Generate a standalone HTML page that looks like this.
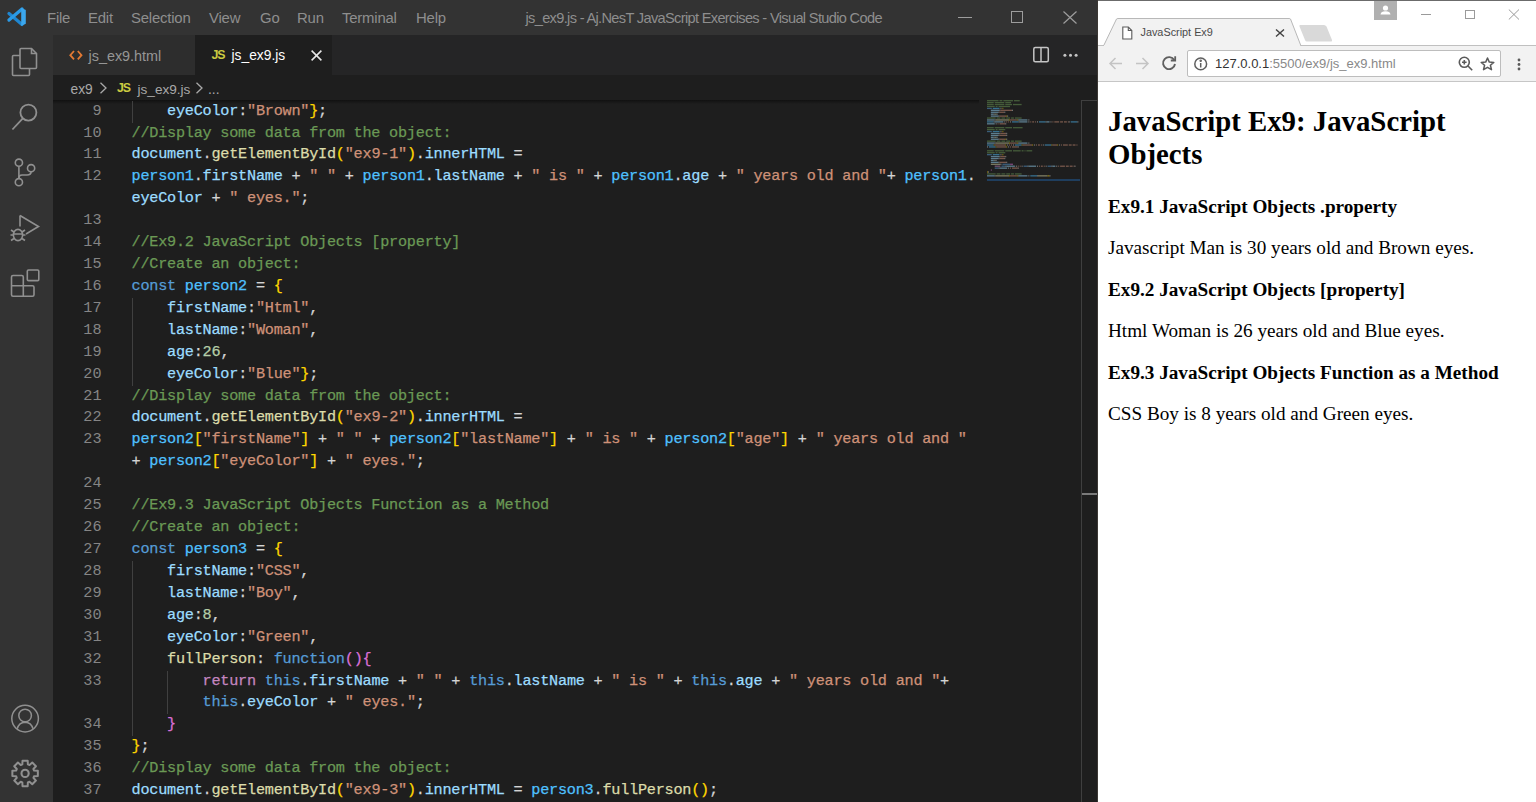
<!DOCTYPE html>
<html><head><meta charset="utf-8"><title>js_ex9.js - VS Code</title>
<style>
*{box-sizing:border-box}
html,body{margin:0;padding:0;width:1536px;height:802px;overflow:hidden;background:#1e1e1e}
body{position:relative;font-family:"Liberation Sans",sans-serif}
.a{position:absolute}
#title{left:0;top:0;width:1098px;height:35px;background:#333333}
.menu{position:absolute;top:8.5px;font-size:14.9px;line-height:18px;color:#8e8e8e;white-space:pre;letter-spacing:-0.2px}
#act{left:0;top:35px;width:53px;height:767px;background:#333333}
#tabs{left:53px;top:35px;width:1045px;height:40px;background:#252526}
#crumbs{left:53px;top:75px;width:1045px;height:25px;background:#1e1e1e}
#editor{left:53px;top:100px;width:1045px;height:702px;background:#1e1e1e}
.ln{position:absolute;right:1434.5px;font-family:"Liberation Mono",monospace;font-size:15.2px;line-height:21.92px;color:#858585;white-space:pre}
.cl{position:absolute;left:131.5px;font-family:"Liberation Mono",monospace;font-size:15.2px;letter-spacing:-0.231px;-webkit-text-stroke:0.25px currentColor;line-height:21.92px;color:#d4d4d4;white-space:pre}
.ig{position:absolute;width:1px;background:#404040}
.mm{position:absolute;height:1.3px;opacity:.5}
.k{color:#569CD6}
.v{color:#4FC1FF}
.p{color:#9CDCFE}
.f{color:#DCDCAA}
.s{color:#CE9178}
.c{color:#6A9955}
.n{color:#B5CEA8}
.o{color:#D4D4D4}
.y{color:#FFD700}
.m{color:#DA70D6}
.r{color:#C586C0}
.ui{position:absolute;white-space:pre;font-family:"Liberation Sans",sans-serif}
#browser{left:1098px;top:0;width:438px;height:802px;background:#fff}
.pg{position:absolute;left:1108px;white-space:pre;font-family:"Liberation Serif",serif;color:#000}
</style></head>
<body>
<!-- ================= VS CODE ================= -->
<div id="title" class="a"></div>
<!-- vscode logo -->
<svg class="a" style="left:0;top:0" width="36" height="34" viewBox="0 0 36 34">
  <path d="M9 13.6 L22 24.4" stroke="#1f86d0" stroke-width="3.3" stroke-linecap="round"/>
  <path d="M9 20.1 L22 8.9" stroke="#2a9ae6" stroke-width="3.3" stroke-linecap="round"/>
  <path d="M21.2 7.8 L25.8 10 V23.8 L21.2 26 Z" fill="#3ba7ee"/>
</svg>
<div class="menu" style="left:47px">File</div>
<div class="menu" style="left:88px">Edit</div>
<div class="menu" style="left:131px">Selection</div>
<div class="menu" style="left:209px">View</div>
<div class="menu" style="left:260px">Go</div>
<div class="menu" style="left:297px">Run</div>
<div class="menu" style="left:342px">Terminal</div>
<div class="menu" style="left:416px">Help</div>
<div class="menu" style="left:525.5px;font-size:14.6px;letter-spacing:-0.665px">js_ex9.js - Aj.NesT JavaScript Exercises - Visual Studio Code</div>
<!-- window controls -->
<div class="a" style="left:958px;top:17px;width:14px;height:1px;background:#9d9d9d"></div>
<div class="a" style="left:1011px;top:11px;width:12px;height:12px;border:1px solid #9d9d9d"></div>
<svg class="a" style="left:1063px;top:11px" width="14" height="13" viewBox="0 0 14 13"><path d="M0.5 0.5 L13.5 12.5 M13.5 0.5 L0.5 12.5" stroke="#9d9d9d" stroke-width="1.2"/></svg>

<div id="act" class="a"></div>
<!-- activity icons -->
<svg class="a" style="left:0;top:35px" width="53" height="767" viewBox="0 35 53 767" fill="none" stroke="#909090" stroke-width="1.6">
  <!-- explorer -->
  <path d="M20 55.5 H13.5 Q12.5 55.5 12.5 56.5 V74.5 Q12.5 75.5 13.5 75.5 H28.5 Q29.5 75.5 29.5 74.5 V69"/>
  <path d="M21 48.5 H31.5 L36.5 53.5 V67.5 Q36.5 68.5 35.5 68.5 H21 Q20 68.5 20 67.5 V49.5 Q20 48.5 21 48.5 Z"/>
  <path d="M31.5 48.5 V53.5 H36.5"/>
  <!-- search -->
  <circle cx="28.4" cy="112.6" r="8" stroke-width="1.8"/>
  <path d="M22.6 118.6 L12.4 129.5" stroke-width="1.8"/>
  <!-- source control -->
  <circle cx="18.9" cy="162.7" r="3.6"/>
  <circle cx="18.9" cy="182.2" r="3.6"/>
  <circle cx="31.1" cy="168.2" r="3.6"/>
  <path d="M18.9 166.3 V178.6"/>
  <path d="M31.1 171.8 Q31.1 175 27 175 H22 Q18.9 175 18.9 178"/>
  <!-- run & debug -->
  <path d="M20 215.5 L38.5 226.5 L26 234"/>
  <path d="M20 215.5 V226.5"/>
  <ellipse cx="18" cy="235" rx="4.6" ry="5.6"/>
  <path d="M11 230 L14 232 M25 230 L22 232 M10.5 235 H13.4 M25.5 235 H22.6 M11 240.5 L14 238.5 M25 240.5 L22 238.5 M13.5 234 H22.5"/>
  <!-- extensions -->
  <path d="M13 275.5 H21.8 Q23.3 275.5 23.3 277 V285.8 H32.5 Q34 285.8 34 287.3 V294.8 Q34 296.3 32.5 296.3 H13 Q11.5 296.3 11.5 294.8 V277 Q11.5 275.5 13 275.5 Z M11.5 285.8 H23.3 V296.3"/>
  <rect x="27.3" y="270" width="11.5" height="10.6" rx="1.2"/>
  <!-- account -->
  <circle cx="25.1" cy="718.6" r="13.3" stroke-width="1.5"/>
  <circle cx="25.1" cy="715.5" r="6.3" stroke-width="1.5"/>
  <path d="M17.2 728.8 Q19 722.5 25.1 722.3 Q31.2 722.5 33 728.8" stroke-width="1.5"/>
  <!-- gear -->
  <circle cx="25.1" cy="773.4" r="3.6" stroke-width="2.1"/>
  <path id="gear" stroke-width="2" stroke-linejoin="round" d="M22.32 764.42 L22.52 760.66 L27.68 760.66 L27.88 764.42 L29.49 765.09 L32.28 762.56 L35.94 766.22 L33.41 769.01 L34.08 770.62 L37.84 770.82 L37.84 775.98 L34.08 776.18 L33.41 777.79 L35.94 780.58 L32.28 784.24 L29.49 781.71 L27.88 782.38 L27.68 786.14 L22.52 786.14 L22.32 782.38 L20.71 781.71 L17.92 784.24 L14.26 780.58 L16.79 777.79 L16.12 776.18 L12.36 775.98 L12.36 770.82 L16.12 770.62 L16.79 769.01 L14.26 766.22 L17.92 762.56 L20.71 765.09 Z"/>
</svg>

<div id="tabs" class="a"></div>
<div class="a" style="left:53px;top:35px;width:141.5px;height:40px;background:#2d2d2d"></div>
<div class="a" style="left:194.5px;top:35px;width:137.5px;height:40px;background:#1e1e1e"></div>
<svg class="a" style="left:68.5px;top:50px" width="14" height="11" viewBox="0 0 14 11" fill="none" stroke="#e37933" stroke-width="1.8"><path d="M5 1 L1.3 5.2 L5 9.4 M8.8 1 L12.5 5.2 L8.8 9.4"/></svg>
<div class="ui" style="left:88.5px;top:45.5px;font-size:14.4px;line-height:20px;color:#969696">js_ex9.html</div>
<div class="ui" style="left:211.5px;top:48.5px;font-size:12.4px;line-height:13px;font-weight:bold;color:#cbcb41;letter-spacing:-1.1px">JS</div>
<div class="ui" style="left:231.5px;top:45.5px;font-size:13.8px;line-height:20px;color:#ffffff">js_ex9.js</div>
<svg class="a" style="left:311px;top:50px" width="11" height="11" viewBox="0 0 11 11"><path d="M0.6 0.6 L10.4 10.4 M10.4 0.6 L0.6 10.4" stroke="#e8e8e8" stroke-width="1.5"/></svg>
<!-- split + more -->
<svg class="a" style="left:1032px;top:46px" width="18" height="18" viewBox="0 0 18 18" fill="none" stroke="#c5c5c5" stroke-width="1.5"><rect x="1.8" y="1.6" width="14.5" height="14.2" rx="1.5"/><path d="M9 1.6 V15.8"/></svg>
<svg class="a" style="left:1060px;top:52px" width="20" height="6" viewBox="0 0 20 6" fill="#c5c5c5"><circle cx="4.9" cy="3.3" r="1.5"/><circle cx="10.5" cy="3.3" r="1.5"/><circle cx="16.1" cy="3.3" r="1.5"/></svg>

<div id="crumbs" class="a"></div>
<div class="ui" style="left:70.5px;top:80.5px;font-size:13.8px;line-height:18px;color:#a9a9a9">ex9</div>
<svg class="a" style="left:99px;top:82px" width="9" height="12" viewBox="0 0 9 12"><path d="M1.5 0.8 L7 6 L1.5 11.2" fill="none" stroke="#a9a9a9" stroke-width="1.3"/></svg>
<div class="ui" style="left:117px;top:81.8px;font-size:12.4px;line-height:13px;font-weight:bold;color:#cbcb41;letter-spacing:-1.1px">JS</div>
<div class="ui" style="left:137.5px;top:80.5px;font-size:13.6px;line-height:18px;color:#a9a9a9">js_ex9.js</div>
<svg class="a" style="left:195px;top:82px" width="9" height="12" viewBox="0 0 9 12"><path d="M1.5 0.8 L7 6 L1.5 11.2" fill="none" stroke="#a9a9a9" stroke-width="1.3"/></svg>
<div class="ui" style="left:208px;top:80.5px;font-size:13.8px;line-height:18px;color:#a9a9a9">...</div>

<div id="editor" class="a"></div>
<!-- scroll shadow -->
<div class="a" style="left:53px;top:100px;width:926px;height:4px;background:linear-gradient(#00000070,#00000000)"></div>
<!-- scrollbar -->
<div class="a" style="left:1081px;top:100px;width:1px;height:702px;background:#3f3f3f"></div>
<div class="a" style="left:1081px;top:100px;width:16px;height:1px;background:#3f3f3f"></div>
<div class="a" style="left:1082px;top:493px;width:15px;height:2px;background:#7a7a7a"></div>
<svg class="a" style="left:987.0px;top:96px;opacity:.5" width="95" height="100" viewBox="0 0 95 100"><rect x="0.00" y="4.05" width="11.54" height="1.3" fill="#6A9955"/><rect x="12.51" y="4.05" width="2.89" height="1.3" fill="#6A9955"/><rect x="16.35" y="4.05" width="9.62" height="1.3" fill="#6A9955"/><rect x="26.94" y="4.05" width="5.77" height="1.3" fill="#6A9955"/><rect x="0.00" y="5.98" width="6.73" height="1.3" fill="#6A9955"/><rect x="7.70" y="5.98" width="9.62" height="1.3" fill="#6A9955"/><rect x="18.28" y="5.98" width="5.77" height="1.3" fill="#6A9955"/><rect x="0.00" y="7.90" width="6.73" height="1.3" fill="#6A9955"/><rect x="7.70" y="7.90" width="9.62" height="1.3" fill="#6A9955"/><rect x="18.28" y="7.90" width="6.73" height="1.3" fill="#6A9955"/><rect x="25.97" y="7.90" width="8.66" height="1.3" fill="#6A9955"/><rect x="0.00" y="9.83" width="7.70" height="1.3" fill="#6A9955"/><rect x="8.66" y="9.83" width="1.92" height="1.3" fill="#6A9955"/><rect x="11.54" y="9.83" width="11.54" height="1.3" fill="#6A9955"/><rect x="0.00" y="11.76" width="4.81" height="1.3" fill="#569CD6"/><rect x="5.77" y="11.76" width="6.73" height="1.3" fill="#4FC1FF"/><rect x="13.47" y="11.76" width="0.96" height="1.3" fill="#D4D4D4"/><rect x="15.39" y="11.76" width="0.96" height="1.3" fill="#FFD700"/><rect x="3.85" y="13.69" width="8.66" height="1.3" fill="#9CDCFE"/><rect x="12.51" y="13.69" width="0.96" height="1.3" fill="#D4D4D4"/><rect x="13.47" y="13.69" width="11.54" height="1.3" fill="#CE9178"/><rect x="25.01" y="13.69" width="0.96" height="1.3" fill="#D4D4D4"/><rect x="3.85" y="15.61" width="7.70" height="1.3" fill="#9CDCFE"/><rect x="11.54" y="15.61" width="0.96" height="1.3" fill="#D4D4D4"/><rect x="12.51" y="15.61" width="4.81" height="1.3" fill="#CE9178"/><rect x="17.32" y="15.61" width="0.96" height="1.3" fill="#D4D4D4"/><rect x="3.85" y="17.54" width="2.89" height="1.3" fill="#9CDCFE"/><rect x="6.73" y="17.54" width="0.96" height="1.3" fill="#D4D4D4"/><rect x="7.70" y="17.54" width="1.92" height="1.3" fill="#B5CEA8"/><rect x="9.62" y="17.54" width="0.96" height="1.3" fill="#D4D4D4"/><rect x="3.85" y="19.47" width="7.70" height="1.3" fill="#9CDCFE"/><rect x="11.54" y="19.47" width="0.96" height="1.3" fill="#D4D4D4"/><rect x="12.51" y="19.47" width="6.73" height="1.3" fill="#CE9178"/><rect x="19.24" y="19.47" width="0.96" height="1.3" fill="#FFD700"/><rect x="20.20" y="19.47" width="0.96" height="1.3" fill="#D4D4D4"/><rect x="0.00" y="21.39" width="8.66" height="1.3" fill="#6A9955"/><rect x="9.62" y="21.39" width="3.85" height="1.3" fill="#6A9955"/><rect x="14.43" y="21.39" width="3.85" height="1.3" fill="#6A9955"/><rect x="19.24" y="21.39" width="3.85" height="1.3" fill="#6A9955"/><rect x="24.05" y="21.39" width="2.89" height="1.3" fill="#6A9955"/><rect x="27.90" y="21.39" width="6.73" height="1.3" fill="#6A9955"/><rect x="0.00" y="23.32" width="7.70" height="1.3" fill="#9CDCFE"/><rect x="7.70" y="23.32" width="0.96" height="1.3" fill="#D4D4D4"/><rect x="8.66" y="23.32" width="13.47" height="1.3" fill="#DCDCAA"/><rect x="22.13" y="23.32" width="0.96" height="1.3" fill="#FFD700"/><rect x="23.09" y="23.32" width="6.73" height="1.3" fill="#CE9178"/><rect x="29.82" y="23.32" width="0.96" height="1.3" fill="#FFD700"/><rect x="30.78" y="23.32" width="0.96" height="1.3" fill="#D4D4D4"/><rect x="31.75" y="23.32" width="8.66" height="1.3" fill="#9CDCFE"/><rect x="41.37" y="23.32" width="0.96" height="1.3" fill="#D4D4D4"/><rect x="0.00" y="25.25" width="6.73" height="1.3" fill="#4FC1FF"/><rect x="6.73" y="25.25" width="0.96" height="1.3" fill="#D4D4D4"/><rect x="7.70" y="25.25" width="8.66" height="1.3" fill="#9CDCFE"/><rect x="17.32" y="25.25" width="0.96" height="1.3" fill="#D4D4D4"/><rect x="19.24" y="25.25" width="0.96" height="1.3" fill="#CE9178"/><rect x="21.16" y="25.25" width="0.96" height="1.3" fill="#CE9178"/><rect x="23.09" y="25.25" width="0.96" height="1.3" fill="#D4D4D4"/><rect x="25.01" y="25.25" width="6.73" height="1.3" fill="#4FC1FF"/><rect x="31.75" y="25.25" width="0.96" height="1.3" fill="#D4D4D4"/><rect x="32.71" y="25.25" width="7.70" height="1.3" fill="#9CDCFE"/><rect x="41.37" y="25.25" width="0.96" height="1.3" fill="#D4D4D4"/><rect x="43.29" y="25.25" width="0.96" height="1.3" fill="#CE9178"/><rect x="45.21" y="25.25" width="1.92" height="1.3" fill="#CE9178"/><rect x="48.10" y="25.25" width="0.96" height="1.3" fill="#CE9178"/><rect x="50.02" y="25.25" width="0.96" height="1.3" fill="#D4D4D4"/><rect x="51.95" y="25.25" width="6.73" height="1.3" fill="#4FC1FF"/><rect x="58.68" y="25.25" width="0.96" height="1.3" fill="#D4D4D4"/><rect x="59.64" y="25.25" width="2.89" height="1.3" fill="#9CDCFE"/><rect x="63.49" y="25.25" width="0.96" height="1.3" fill="#D4D4D4"/><rect x="65.42" y="25.25" width="0.96" height="1.3" fill="#CE9178"/><rect x="67.34" y="25.25" width="4.81" height="1.3" fill="#CE9178"/><rect x="73.11" y="25.25" width="2.89" height="1.3" fill="#CE9178"/><rect x="76.96" y="25.25" width="2.89" height="1.3" fill="#CE9178"/><rect x="80.81" y="25.25" width="0.96" height="1.3" fill="#CE9178"/><rect x="81.77" y="25.25" width="0.96" height="1.3" fill="#D4D4D4"/><rect x="83.69" y="25.25" width="6.73" height="1.3" fill="#4FC1FF"/><rect x="90.43" y="25.25" width="0.96" height="1.3" fill="#D4D4D4"/><rect x="0.00" y="27.17" width="7.70" height="1.3" fill="#9CDCFE"/><rect x="8.66" y="27.17" width="0.96" height="1.3" fill="#D4D4D4"/><rect x="10.58" y="27.17" width="0.96" height="1.3" fill="#CE9178"/><rect x="12.51" y="27.17" width="5.77" height="1.3" fill="#CE9178"/><rect x="18.28" y="27.17" width="0.96" height="1.3" fill="#D4D4D4"/><rect x="0.00" y="31.03" width="6.73" height="1.3" fill="#6A9955"/><rect x="7.70" y="31.03" width="9.62" height="1.3" fill="#6A9955"/><rect x="18.28" y="31.03" width="6.73" height="1.3" fill="#6A9955"/><rect x="25.97" y="31.03" width="9.62" height="1.3" fill="#6A9955"/><rect x="0.00" y="32.95" width="7.70" height="1.3" fill="#6A9955"/><rect x="8.66" y="32.95" width="1.92" height="1.3" fill="#6A9955"/><rect x="11.54" y="32.95" width="6.73" height="1.3" fill="#6A9955"/><rect x="0.00" y="34.88" width="4.81" height="1.3" fill="#569CD6"/><rect x="5.77" y="34.88" width="6.73" height="1.3" fill="#4FC1FF"/><rect x="13.47" y="34.88" width="0.96" height="1.3" fill="#D4D4D4"/><rect x="15.39" y="34.88" width="0.96" height="1.3" fill="#FFD700"/><rect x="3.85" y="36.81" width="8.66" height="1.3" fill="#9CDCFE"/><rect x="12.51" y="36.81" width="0.96" height="1.3" fill="#D4D4D4"/><rect x="13.47" y="36.81" width="5.77" height="1.3" fill="#CE9178"/><rect x="19.24" y="36.81" width="0.96" height="1.3" fill="#D4D4D4"/><rect x="3.85" y="38.74" width="7.70" height="1.3" fill="#9CDCFE"/><rect x="11.54" y="38.74" width="0.96" height="1.3" fill="#D4D4D4"/><rect x="12.51" y="38.74" width="6.73" height="1.3" fill="#CE9178"/><rect x="19.24" y="38.74" width="0.96" height="1.3" fill="#D4D4D4"/><rect x="3.85" y="40.66" width="2.89" height="1.3" fill="#9CDCFE"/><rect x="6.73" y="40.66" width="0.96" height="1.3" fill="#D4D4D4"/><rect x="7.70" y="40.66" width="1.92" height="1.3" fill="#B5CEA8"/><rect x="9.62" y="40.66" width="0.96" height="1.3" fill="#D4D4D4"/><rect x="3.85" y="42.59" width="7.70" height="1.3" fill="#9CDCFE"/><rect x="11.54" y="42.59" width="0.96" height="1.3" fill="#D4D4D4"/><rect x="12.51" y="42.59" width="5.77" height="1.3" fill="#CE9178"/><rect x="18.28" y="42.59" width="0.96" height="1.3" fill="#FFD700"/><rect x="19.24" y="42.59" width="0.96" height="1.3" fill="#D4D4D4"/><rect x="0.00" y="44.52" width="8.66" height="1.3" fill="#6A9955"/><rect x="9.62" y="44.52" width="3.85" height="1.3" fill="#6A9955"/><rect x="14.43" y="44.52" width="3.85" height="1.3" fill="#6A9955"/><rect x="19.24" y="44.52" width="3.85" height="1.3" fill="#6A9955"/><rect x="24.05" y="44.52" width="2.89" height="1.3" fill="#6A9955"/><rect x="27.90" y="44.52" width="6.73" height="1.3" fill="#6A9955"/><rect x="0.00" y="46.44" width="7.70" height="1.3" fill="#9CDCFE"/><rect x="7.70" y="46.44" width="0.96" height="1.3" fill="#D4D4D4"/><rect x="8.66" y="46.44" width="13.47" height="1.3" fill="#DCDCAA"/><rect x="22.13" y="46.44" width="0.96" height="1.3" fill="#FFD700"/><rect x="23.09" y="46.44" width="6.73" height="1.3" fill="#CE9178"/><rect x="29.82" y="46.44" width="0.96" height="1.3" fill="#FFD700"/><rect x="30.78" y="46.44" width="0.96" height="1.3" fill="#D4D4D4"/><rect x="31.75" y="46.44" width="8.66" height="1.3" fill="#9CDCFE"/><rect x="41.37" y="46.44" width="0.96" height="1.3" fill="#D4D4D4"/><rect x="0.00" y="48.37" width="6.73" height="1.3" fill="#4FC1FF"/><rect x="6.73" y="48.37" width="0.96" height="1.3" fill="#FFD700"/><rect x="7.70" y="48.37" width="10.58" height="1.3" fill="#CE9178"/><rect x="18.28" y="48.37" width="0.96" height="1.3" fill="#FFD700"/><rect x="20.20" y="48.37" width="0.96" height="1.3" fill="#D4D4D4"/><rect x="22.13" y="48.37" width="0.96" height="1.3" fill="#CE9178"/><rect x="24.05" y="48.37" width="0.96" height="1.3" fill="#CE9178"/><rect x="25.97" y="48.37" width="0.96" height="1.3" fill="#D4D4D4"/><rect x="27.90" y="48.37" width="6.73" height="1.3" fill="#4FC1FF"/><rect x="34.63" y="48.37" width="0.96" height="1.3" fill="#FFD700"/><rect x="35.59" y="48.37" width="9.62" height="1.3" fill="#CE9178"/><rect x="45.21" y="48.37" width="0.96" height="1.3" fill="#FFD700"/><rect x="47.14" y="48.37" width="0.96" height="1.3" fill="#D4D4D4"/><rect x="49.06" y="48.37" width="0.96" height="1.3" fill="#CE9178"/><rect x="50.99" y="48.37" width="1.92" height="1.3" fill="#CE9178"/><rect x="53.87" y="48.37" width="0.96" height="1.3" fill="#CE9178"/><rect x="55.80" y="48.37" width="0.96" height="1.3" fill="#D4D4D4"/><rect x="57.72" y="48.37" width="6.73" height="1.3" fill="#4FC1FF"/><rect x="64.45" y="48.37" width="0.96" height="1.3" fill="#FFD700"/><rect x="65.42" y="48.37" width="4.81" height="1.3" fill="#CE9178"/><rect x="70.23" y="48.37" width="0.96" height="1.3" fill="#FFD700"/><rect x="72.15" y="48.37" width="0.96" height="1.3" fill="#D4D4D4"/><rect x="74.07" y="48.37" width="0.96" height="1.3" fill="#CE9178"/><rect x="76.00" y="48.37" width="4.81" height="1.3" fill="#CE9178"/><rect x="81.77" y="48.37" width="2.89" height="1.3" fill="#CE9178"/><rect x="85.62" y="48.37" width="2.89" height="1.3" fill="#CE9178"/><rect x="89.47" y="48.37" width="0.96" height="1.3" fill="#CE9178"/><rect x="0.00" y="50.30" width="0.96" height="1.3" fill="#D4D4D4"/><rect x="1.92" y="50.30" width="6.73" height="1.3" fill="#4FC1FF"/><rect x="8.66" y="50.30" width="0.96" height="1.3" fill="#FFD700"/><rect x="9.62" y="50.30" width="9.62" height="1.3" fill="#CE9178"/><rect x="19.24" y="50.30" width="0.96" height="1.3" fill="#FFD700"/><rect x="21.16" y="50.30" width="0.96" height="1.3" fill="#D4D4D4"/><rect x="23.09" y="50.30" width="0.96" height="1.3" fill="#CE9178"/><rect x="25.01" y="50.30" width="5.77" height="1.3" fill="#CE9178"/><rect x="30.78" y="50.30" width="0.96" height="1.3" fill="#D4D4D4"/><rect x="0.00" y="54.15" width="6.73" height="1.3" fill="#6A9955"/><rect x="7.70" y="54.15" width="9.62" height="1.3" fill="#6A9955"/><rect x="18.28" y="54.15" width="6.73" height="1.3" fill="#6A9955"/><rect x="25.97" y="54.15" width="7.70" height="1.3" fill="#6A9955"/><rect x="34.63" y="54.15" width="1.92" height="1.3" fill="#6A9955"/><rect x="37.52" y="54.15" width="0.96" height="1.3" fill="#6A9955"/><rect x="39.44" y="54.15" width="5.77" height="1.3" fill="#6A9955"/><rect x="0.00" y="56.08" width="7.70" height="1.3" fill="#6A9955"/><rect x="8.66" y="56.08" width="1.92" height="1.3" fill="#6A9955"/><rect x="11.54" y="56.08" width="6.73" height="1.3" fill="#6A9955"/><rect x="0.00" y="58.01" width="4.81" height="1.3" fill="#569CD6"/><rect x="5.77" y="58.01" width="6.73" height="1.3" fill="#4FC1FF"/><rect x="13.47" y="58.01" width="0.96" height="1.3" fill="#D4D4D4"/><rect x="15.39" y="58.01" width="0.96" height="1.3" fill="#FFD700"/><rect x="3.85" y="59.93" width="8.66" height="1.3" fill="#9CDCFE"/><rect x="12.51" y="59.93" width="0.96" height="1.3" fill="#D4D4D4"/><rect x="13.47" y="59.93" width="4.81" height="1.3" fill="#CE9178"/><rect x="18.28" y="59.93" width="0.96" height="1.3" fill="#D4D4D4"/><rect x="3.85" y="61.86" width="7.70" height="1.3" fill="#9CDCFE"/><rect x="11.54" y="61.86" width="0.96" height="1.3" fill="#D4D4D4"/><rect x="12.51" y="61.86" width="4.81" height="1.3" fill="#CE9178"/><rect x="17.32" y="61.86" width="0.96" height="1.3" fill="#D4D4D4"/><rect x="3.85" y="63.79" width="2.89" height="1.3" fill="#9CDCFE"/><rect x="6.73" y="63.79" width="0.96" height="1.3" fill="#D4D4D4"/><rect x="7.70" y="63.79" width="0.96" height="1.3" fill="#B5CEA8"/><rect x="8.66" y="63.79" width="0.96" height="1.3" fill="#D4D4D4"/><rect x="3.85" y="65.71" width="7.70" height="1.3" fill="#9CDCFE"/><rect x="11.54" y="65.71" width="0.96" height="1.3" fill="#D4D4D4"/><rect x="12.51" y="65.71" width="6.73" height="1.3" fill="#CE9178"/><rect x="19.24" y="65.71" width="0.96" height="1.3" fill="#D4D4D4"/><rect x="3.85" y="67.64" width="9.62" height="1.3" fill="#DCDCAA"/><rect x="13.47" y="67.64" width="0.96" height="1.3" fill="#D4D4D4"/><rect x="15.39" y="67.64" width="7.70" height="1.3" fill="#569CD6"/><rect x="23.09" y="67.64" width="2.89" height="1.3" fill="#DA70D6"/><rect x="7.70" y="69.57" width="5.77" height="1.3" fill="#C586C0"/><rect x="14.43" y="69.57" width="3.85" height="1.3" fill="#569CD6"/><rect x="18.28" y="69.57" width="0.96" height="1.3" fill="#D4D4D4"/><rect x="19.24" y="69.57" width="8.66" height="1.3" fill="#9CDCFE"/><rect x="28.86" y="69.57" width="0.96" height="1.3" fill="#D4D4D4"/><rect x="30.78" y="69.57" width="0.96" height="1.3" fill="#CE9178"/><rect x="32.71" y="69.57" width="0.96" height="1.3" fill="#CE9178"/><rect x="34.63" y="69.57" width="0.96" height="1.3" fill="#D4D4D4"/><rect x="36.56" y="69.57" width="3.85" height="1.3" fill="#569CD6"/><rect x="40.40" y="69.57" width="0.96" height="1.3" fill="#D4D4D4"/><rect x="41.37" y="69.57" width="7.70" height="1.3" fill="#9CDCFE"/><rect x="50.02" y="69.57" width="0.96" height="1.3" fill="#D4D4D4"/><rect x="51.95" y="69.57" width="0.96" height="1.3" fill="#CE9178"/><rect x="53.87" y="69.57" width="1.92" height="1.3" fill="#CE9178"/><rect x="56.76" y="69.57" width="0.96" height="1.3" fill="#CE9178"/><rect x="58.68" y="69.57" width="0.96" height="1.3" fill="#D4D4D4"/><rect x="60.61" y="69.57" width="3.85" height="1.3" fill="#569CD6"/><rect x="64.45" y="69.57" width="0.96" height="1.3" fill="#D4D4D4"/><rect x="65.42" y="69.57" width="2.89" height="1.3" fill="#9CDCFE"/><rect x="69.26" y="69.57" width="0.96" height="1.3" fill="#D4D4D4"/><rect x="71.19" y="69.57" width="0.96" height="1.3" fill="#CE9178"/><rect x="73.11" y="69.57" width="4.81" height="1.3" fill="#CE9178"/><rect x="78.88" y="69.57" width="2.89" height="1.3" fill="#CE9178"/><rect x="82.73" y="69.57" width="2.89" height="1.3" fill="#CE9178"/><rect x="86.58" y="69.57" width="0.96" height="1.3" fill="#CE9178"/><rect x="87.54" y="69.57" width="0.96" height="1.3" fill="#D4D4D4"/><rect x="7.70" y="71.50" width="3.85" height="1.3" fill="#569CD6"/><rect x="11.54" y="71.50" width="0.96" height="1.3" fill="#D4D4D4"/><rect x="12.51" y="71.50" width="7.70" height="1.3" fill="#9CDCFE"/><rect x="21.16" y="71.50" width="0.96" height="1.3" fill="#D4D4D4"/><rect x="23.09" y="71.50" width="0.96" height="1.3" fill="#CE9178"/><rect x="25.01" y="71.50" width="5.77" height="1.3" fill="#CE9178"/><rect x="30.78" y="71.50" width="0.96" height="1.3" fill="#D4D4D4"/><rect x="3.85" y="73.42" width="0.96" height="1.3" fill="#DA70D6"/><rect x="0.00" y="75.35" width="0.96" height="1.3" fill="#FFD700"/><rect x="0.96" y="75.35" width="0.96" height="1.3" fill="#D4D4D4"/><rect x="0.00" y="77.28" width="8.66" height="1.3" fill="#6A9955"/><rect x="9.62" y="77.28" width="3.85" height="1.3" fill="#6A9955"/><rect x="14.43" y="77.28" width="3.85" height="1.3" fill="#6A9955"/><rect x="19.24" y="77.28" width="3.85" height="1.3" fill="#6A9955"/><rect x="24.05" y="77.28" width="2.89" height="1.3" fill="#6A9955"/><rect x="27.90" y="77.28" width="6.73" height="1.3" fill="#6A9955"/><rect x="0.00" y="79.20" width="7.70" height="1.3" fill="#9CDCFE"/><rect x="7.70" y="79.20" width="0.96" height="1.3" fill="#D4D4D4"/><rect x="8.66" y="79.20" width="13.47" height="1.3" fill="#DCDCAA"/><rect x="22.13" y="79.20" width="0.96" height="1.3" fill="#FFD700"/><rect x="23.09" y="79.20" width="6.73" height="1.3" fill="#CE9178"/><rect x="29.82" y="79.20" width="0.96" height="1.3" fill="#FFD700"/><rect x="30.78" y="79.20" width="0.96" height="1.3" fill="#D4D4D4"/><rect x="31.75" y="79.20" width="8.66" height="1.3" fill="#9CDCFE"/><rect x="41.37" y="79.20" width="0.96" height="1.3" fill="#D4D4D4"/><rect x="43.29" y="79.20" width="6.73" height="1.3" fill="#4FC1FF"/><rect x="50.02" y="79.20" width="0.96" height="1.3" fill="#D4D4D4"/><rect x="50.99" y="79.20" width="9.62" height="1.3" fill="#DCDCAA"/><rect x="60.61" y="79.20" width="1.92" height="1.3" fill="#FFD700"/><rect x="62.53" y="79.20" width="0.96" height="1.3" fill="#D4D4D4"/></svg>
<div class="a" style="left:987px;top:178.8px;width:93px;height:2px;background:#1f3e5e"></div>
<div class="ln" style="top:100.60px">9</div>
<div class="cl" style="top:100.60px"><span class="o">    </span><span class="p">eyeColor</span><span class="o">:</span><span class="s">&quot;Brown&quot;</span><span class="y">}</span><span class="o">;</span></div>
<div class="ln" style="top:122.52px">10</div>
<div class="cl" style="top:122.52px"><span class="c">//Display some data from the object:</span></div>
<div class="ln" style="top:144.44px">11</div>
<div class="cl" style="top:144.44px"><span class="p">document</span><span class="o">.</span><span class="f">getElementById</span><span class="y">(</span><span class="s">&quot;ex9-1&quot;</span><span class="y">)</span><span class="o">.</span><span class="p">innerHTML</span><span class="o"> =</span></div>
<div class="ln" style="top:166.36px">12</div>
<div class="cl" style="top:166.36px"><span class="v">person1</span><span class="o">.</span><span class="p">firstName</span><span class="o"> + </span><span class="s">&quot; &quot;</span><span class="o"> + </span><span class="v">person1</span><span class="o">.</span><span class="p">lastName</span><span class="o"> + </span><span class="s">&quot; is &quot;</span><span class="o"> + </span><span class="v">person1</span><span class="o">.</span><span class="p">age</span><span class="o"> + </span><span class="s">&quot; years old and &quot;</span><span class="o">+ </span><span class="v">person1</span><span class="o">.</span></div>
<div class="cl" style="top:188.28px"><span class="p">eyeColor</span><span class="o"> + </span><span class="s">&quot; eyes.&quot;</span><span class="o">;</span></div>
<div class="ln" style="top:210.20px">13</div>
<div class="ln" style="top:232.12px">14</div>
<div class="cl" style="top:232.12px"><span class="c">//Ex9.2 JavaScript Objects [property]</span></div>
<div class="ln" style="top:254.04px">15</div>
<div class="cl" style="top:254.04px"><span class="c">//Create an object:</span></div>
<div class="ln" style="top:275.96px">16</div>
<div class="cl" style="top:275.96px"><span class="k">const</span><span class="o"> </span><span class="v">person2</span><span class="o"> = </span><span class="y">{</span></div>
<div class="ln" style="top:297.88px">17</div>
<div class="cl" style="top:297.88px"><span class="o">    </span><span class="p">firstName</span><span class="o">:</span><span class="s">&quot;Html&quot;</span><span class="o">,</span></div>
<div class="ln" style="top:319.80px">18</div>
<div class="cl" style="top:319.80px"><span class="o">    </span><span class="p">lastName</span><span class="o">:</span><span class="s">&quot;Woman&quot;</span><span class="o">,</span></div>
<div class="ln" style="top:341.72px">19</div>
<div class="cl" style="top:341.72px"><span class="o">    </span><span class="p">age</span><span class="o">:</span><span class="n">26</span><span class="o">,</span></div>
<div class="ln" style="top:363.64px">20</div>
<div class="cl" style="top:363.64px"><span class="o">    </span><span class="p">eyeColor</span><span class="o">:</span><span class="s">&quot;Blue&quot;</span><span class="y">}</span><span class="o">;</span></div>
<div class="ln" style="top:385.56px">21</div>
<div class="cl" style="top:385.56px"><span class="c">//Display some data from the object:</span></div>
<div class="ln" style="top:407.48px">22</div>
<div class="cl" style="top:407.48px"><span class="p">document</span><span class="o">.</span><span class="f">getElementById</span><span class="y">(</span><span class="s">&quot;ex9-2&quot;</span><span class="y">)</span><span class="o">.</span><span class="p">innerHTML</span><span class="o"> =</span></div>
<div class="ln" style="top:429.40px">23</div>
<div class="cl" style="top:429.40px"><span class="v">person2</span><span class="y">[</span><span class="s">&quot;firstName&quot;</span><span class="y">]</span><span class="o"> + </span><span class="s">&quot; &quot;</span><span class="o"> + </span><span class="v">person2</span><span class="y">[</span><span class="s">&quot;lastName&quot;</span><span class="y">]</span><span class="o"> + </span><span class="s">&quot; is &quot;</span><span class="o"> + </span><span class="v">person2</span><span class="y">[</span><span class="s">&quot;age&quot;</span><span class="y">]</span><span class="o"> + </span><span class="s">&quot; years old and &quot;</span></div>
<div class="cl" style="top:451.32px"><span class="o">+ </span><span class="v">person2</span><span class="y">[</span><span class="s">&quot;eyeColor&quot;</span><span class="y">]</span><span class="o"> + </span><span class="s">&quot; eyes.&quot;</span><span class="o">;</span></div>
<div class="ln" style="top:473.24px">24</div>
<div class="ln" style="top:495.16px">25</div>
<div class="cl" style="top:495.16px"><span class="c">//Ex9.3 JavaScript Objects Function as a Method</span></div>
<div class="ln" style="top:517.08px">26</div>
<div class="cl" style="top:517.08px"><span class="c">//Create an object:</span></div>
<div class="ln" style="top:539.00px">27</div>
<div class="cl" style="top:539.00px"><span class="k">const</span><span class="o"> </span><span class="v">person3</span><span class="o"> = </span><span class="y">{</span></div>
<div class="ln" style="top:560.92px">28</div>
<div class="cl" style="top:560.92px"><span class="o">    </span><span class="p">firstName</span><span class="o">:</span><span class="s">&quot;CSS&quot;</span><span class="o">,</span></div>
<div class="ln" style="top:582.84px">29</div>
<div class="cl" style="top:582.84px"><span class="o">    </span><span class="p">lastName</span><span class="o">:</span><span class="s">&quot;Boy&quot;</span><span class="o">,</span></div>
<div class="ln" style="top:604.76px">30</div>
<div class="cl" style="top:604.76px"><span class="o">    </span><span class="p">age</span><span class="o">:</span><span class="n">8</span><span class="o">,</span></div>
<div class="ln" style="top:626.68px">31</div>
<div class="cl" style="top:626.68px"><span class="o">    </span><span class="p">eyeColor</span><span class="o">:</span><span class="s">&quot;Green&quot;</span><span class="o">,</span></div>
<div class="ln" style="top:648.60px">32</div>
<div class="cl" style="top:648.60px"><span class="o">    </span><span class="f">fullPerson</span><span class="o">: </span><span class="k">function</span><span class="m">(){</span></div>
<div class="ln" style="top:670.52px">33</div>
<div class="cl" style="top:670.52px"><span class="o">        </span><span class="r">return</span><span class="o"> </span><span class="k">this</span><span class="o">.</span><span class="p">firstName</span><span class="o"> + </span><span class="s">&quot; &quot;</span><span class="o"> + </span><span class="k">this</span><span class="o">.</span><span class="p">lastName</span><span class="o"> + </span><span class="s">&quot; is &quot;</span><span class="o"> + </span><span class="k">this</span><span class="o">.</span><span class="p">age</span><span class="o"> + </span><span class="s">&quot; years old and &quot;</span><span class="o">+</span></div>
<div class="cl" style="top:692.44px"><span class="o">        </span><span class="k">this</span><span class="o">.</span><span class="p">eyeColor</span><span class="o"> + </span><span class="s">&quot; eyes.&quot;</span><span class="o">;</span></div>
<div class="ln" style="top:714.36px">34</div>
<div class="cl" style="top:714.36px"><span class="o">    </span><span class="m">}</span></div>
<div class="ln" style="top:736.28px">35</div>
<div class="cl" style="top:736.28px"><span class="y">}</span><span class="o">;</span></div>
<div class="ln" style="top:758.20px">36</div>
<div class="cl" style="top:758.20px"><span class="c">//Display some data from the object:</span></div>
<div class="ln" style="top:780.12px">37</div>
<div class="cl" style="top:780.12px"><span class="p">document</span><span class="o">.</span><span class="f">getElementById</span><span class="y">(</span><span class="s">&quot;ex9-3&quot;</span><span class="y">)</span><span class="o">.</span><span class="p">innerHTML</span><span class="o"> = </span><span class="v">person3</span><span class="o">.</span><span class="f">fullPerson</span><span class="y">()</span><span class="o">;</span></div>
<div class="ig" style="left:131.5px;top:100.60px;height:21.92px"></div>
<div class="ig" style="left:131.5px;top:297.88px;height:87.68px"></div>
<div class="ig" style="left:131.5px;top:560.92px;height:175.36px"></div>
<div class="ig" style="left:167.1px;top:670.52px;height:43.84px"></div>

<!-- ================= BROWSER ================= -->
<div class="a" style="left:1097px;top:0;width:1px;height:802px;background:#3c3834"></div>
<div id="browser" class="a"></div>
<div class="a" style="left:1098px;top:0;width:438px;height:1px;background:#6b6b6b"></div>
<!-- toolbar -->
<div class="a" style="left:1098px;top:45px;width:438px;height:37px;background:#f2f2f2;border-top:1px solid #c0c0c0;border-bottom:1px solid #c6c6c6"></div>
<!-- active tab -->
<svg class="a" style="left:1098px;top:0" width="240" height="47" viewBox="0 0 240 47">
  <path d="M5.5 46 L18.5 19 Q19 18.5 20 18.5 H191 Q192 18.5 192.5 19 L203 46" fill="#f2f2f2" stroke="#b8b8b8" stroke-width="1"/>
  <rect x="6" y="45" width="196" height="3" fill="#f2f2f2"/>
  <path d="M202 25 H226 Q227.5 25 228.5 26.5 L234 40 Q234.5 41.5 233 41.5 H209 Q207.5 41.5 207 40 L201.5 26.5 Q201 25 202 25 Z" fill="#d9d9d9"/>
</svg>
<svg class="a" style="left:1122px;top:26px" width="11" height="14" viewBox="0 0 11 14" fill="#fff" stroke="#5a5a5a" stroke-width="1.1"><path d="M0.8 1 H6.3 L9.8 4.5 V13 H0.8 Z"/><path d="M6.3 1 V4.5 H9.8" fill="none"/></svg>
<div class="ui" style="left:1140.5px;top:25.2px;font-size:10.85px;line-height:14px;color:#4a4a4a">JavaScript Ex9</div>
<svg class="a" style="left:1275px;top:29px" width="10" height="8" viewBox="0 0 10 8"><path d="M1 0.5 L9 7.5 M9 0.5 L1 7.5" stroke="#444" stroke-width="1.4"/></svg>
<!-- profile + window controls -->
<div class="a" style="left:1374px;top:1px;width:23px;height:19px;background:#b0b0b0"></div>
<svg class="a" style="left:1374px;top:1px" width="23" height="19" viewBox="0 0 23 19" fill="#fff"><circle cx="11.5" cy="7" r="2.6"/><path d="M6.5 13.5 Q7 10.2 11.5 10.2 Q16 10.2 16.5 13.5 Z"/></svg>
<div class="a" style="left:1421px;top:14px;width:10px;height:1px;background:#9a9a9a"></div>
<div class="a" style="left:1465px;top:10px;width:10px;height:9px;border:1px solid #9a9a9a"></div>
<svg class="a" style="left:1508px;top:9px" width="12" height="11" viewBox="0 0 12 11"><path d="M0.8 0.5 L11 10.5 M11 0.5 L0.8 10.5" stroke="#9a9a9a" stroke-width="1"/></svg>
<!-- nav buttons -->
<svg class="a" style="left:1108px;top:56px" width="16" height="15" viewBox="0 0 16 15" fill="none" stroke="#c4c4c4" stroke-width="1.5"><path d="M14 7.5 H2 M7.5 2 L2 7.5 L7.5 13"/></svg>
<svg class="a" style="left:1134px;top:56px" width="16" height="15" viewBox="0 0 16 15" fill="none" stroke="#c4c4c4" stroke-width="1.5"><path d="M2 7.5 H14 M8.5 2 L14 7.5 L8.5 13"/></svg>
<svg class="a" style="left:1161px;top:55px" width="17" height="16" viewBox="0 0 17 16" fill="none" stroke="#5f5f5f" stroke-width="1.9"><path d="M13.2 5 A6 6 0 1 0 14 9"/><path d="M9.8 5.5 H14.2 V1.2" stroke-width="1.8"/></svg>
<!-- omnibox -->
<div class="a" style="left:1187px;top:50px;width:314px;height:27px;background:#fff;border:1px solid #bdbdbd;border-radius:2px"></div>
<svg class="a" style="left:1193px;top:57px" width="16" height="14" viewBox="0 0 16 14" fill="none" stroke="#5f5f5f" stroke-width="1.5"><circle cx="7.7" cy="6.9" r="5.9"/><path d="M7.7 6 V10.5"/><circle cx="7.7" cy="3.7" r="0.5" fill="#5f5f5f"/></svg>
<div class="ui" style="left:1215px;top:55px;font-size:13px;line-height:17px;color:#888"><span style="color:#333">127.0.0.1</span>:5500/ex9/js_ex9.html</div>
<svg class="a" style="left:1458px;top:56px" width="16" height="15" viewBox="0 0 16 15" fill="none" stroke="#5a5a5a" stroke-width="1.6"><circle cx="6.3" cy="6.3" r="5"/><path d="M10 10 L14.2 14.2 M6.3 4 V8.6 M4 6.3 H8.6"/></svg>
<svg class="a" style="left:1480px;top:57px" width="15" height="14" viewBox="0 0 15 14" fill="none" stroke="#5a5a5a" stroke-width="1.5" stroke-linejoin="round"><path d="M7.5 1 L9.3 5.1 L13.8 5.4 L10.4 8.3 L11.5 12.7 L7.5 10.3 L3.5 12.7 L4.6 8.3 L1.2 5.4 L5.7 5.1 Z"/></svg>
<svg class="a" style="left:1516px;top:58px" width="6" height="13" viewBox="0 0 6 13" fill="#5a5a5a"><circle cx="3" cy="2" r="1.4"/><circle cx="3" cy="6.5" r="1.4"/><circle cx="3" cy="11" r="1.4"/></svg>

<!-- page content -->
<div class="pg" style="top:105px;font-size:28.8px;line-height:33.2px;font-weight:bold">JavaScript Ex9: JavaScript<br>Objects</div>
<div class="pg" style="top:196.0px;font-size:19.2px;line-height:22px;font-weight:bold">Ex9.1 JavaScript Objects .property</div>
<div class="pg" style="top:237.0px;font-size:19.2px;line-height:22px">Javascript Man is 30 years old and Brown eyes.</div>
<div class="pg" style="top:279.0px;font-size:19.2px;line-height:22px;font-weight:bold">Ex9.2 JavaScript Objects [property]</div>
<div class="pg" style="top:320.0px;font-size:19.2px;line-height:22px">Html Woman is 26 years old and Blue eyes.</div>
<div class="pg" style="top:362.0px;font-size:19.2px;line-height:22px;font-weight:bold">Ex9.3 JavaScript Objects Function as a Method</div>
<div class="pg" style="top:403.0px;font-size:19.2px;line-height:22px">CSS Boy is 8 years old and Green eyes.</div>
</body></html>
